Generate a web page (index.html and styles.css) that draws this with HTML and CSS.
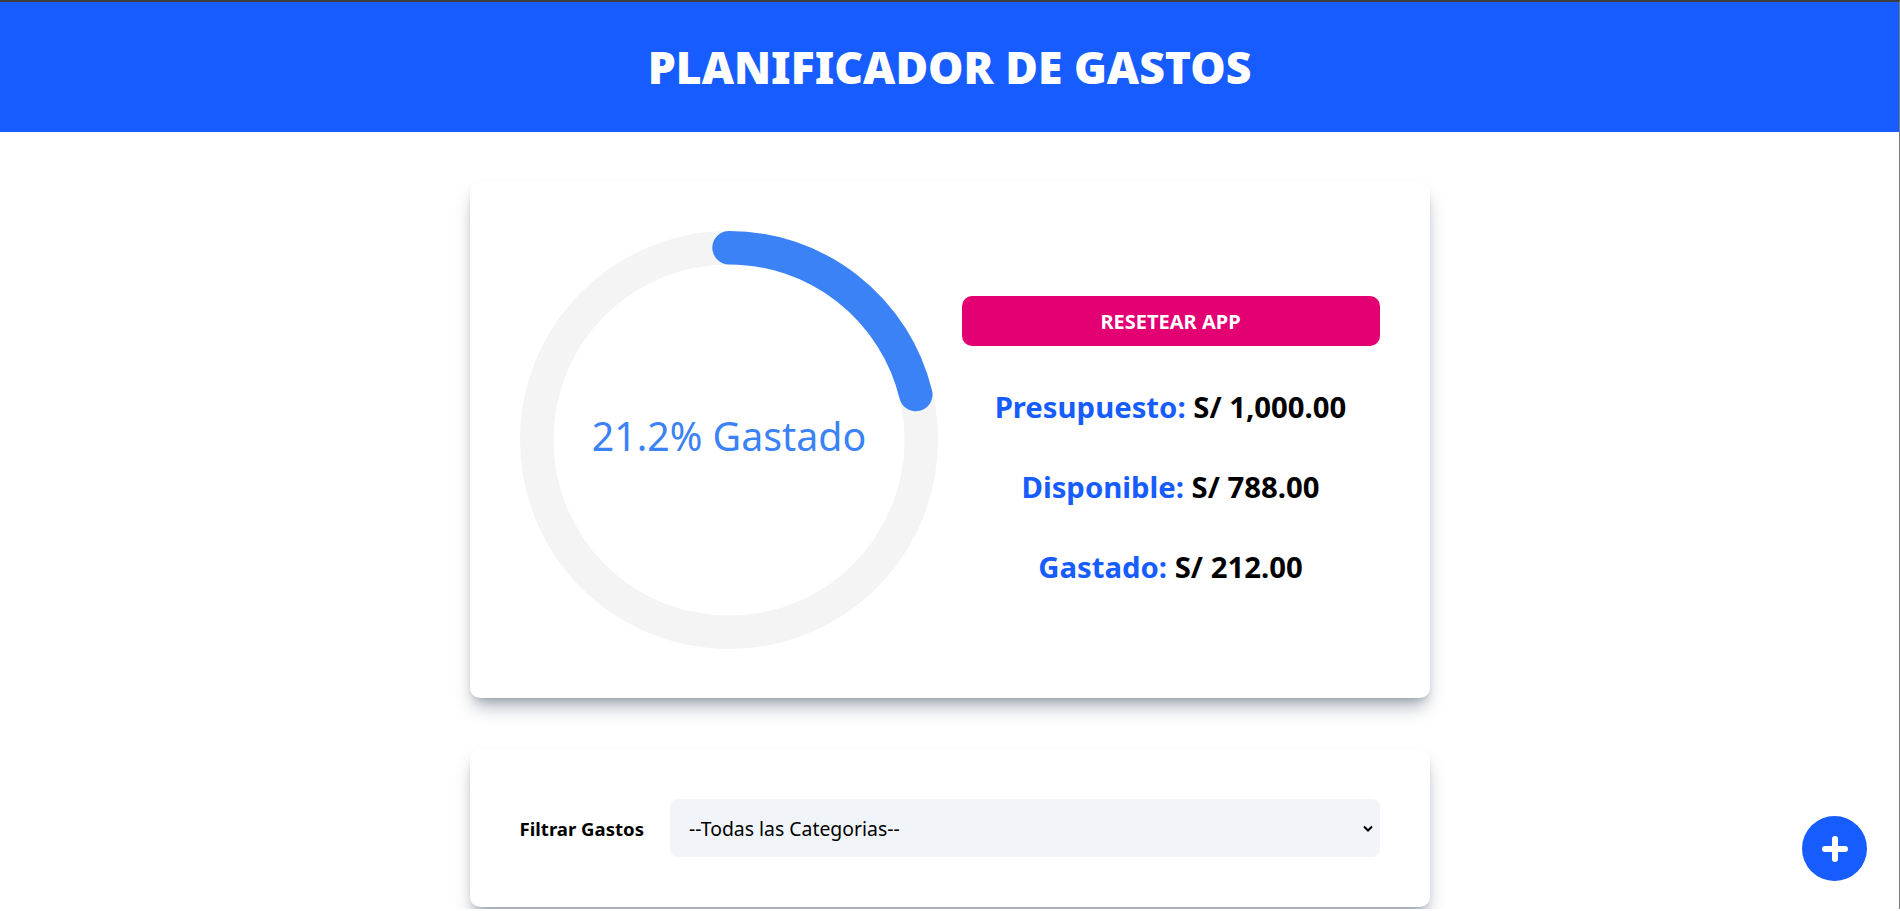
FILE: index.html
```html
<!DOCTYPE html>
<html lang="es">
<head>
<meta charset="utf-8">
<title>Planificador de Gastos</title>
<link rel="stylesheet" href="styles.css">
</head>
<body>
<header class="header">
  <h1 class="title">Planificador de Gastos</h1>
</header>
<main class="main">
  <section class="card budget">
    <div class="chart">
      <svg class="progress" viewBox="0 0 100 100">
        <circle class="trail" cx="50" cy="50" r="46"></circle>
        <path class="bar" d="M50,4 A46,46 0 0 1 94.69,39.12"></path>
        <text class="progress-text" x="50" y="50">21.2% Gastado</text>
      </svg>
    </div>
    <div class="summary">
      <button class="reset" type="button">Resetear App</button>
      <p class="stat"><span class="stat-label">Presupuesto:</span> S/ 1,000.00</p>
      <p class="stat"><span class="stat-label">Disponible:</span> S/ 788.00</p>
      <p class="stat"><span class="stat-label">Gastado:</span> S/ 212.00</p>
    </div>
  </section>
  <section class="card filter">
    <form class="filter-form">
      <label class="filter-label" for="category">Filtrar Gastos</label>
      <div class="select-wrap">
        <select id="category" class="select">
          <option>--Todas las Categorias--</option>
          <option>Ahorro</option>
          <option>Comida</option>
          <option>Casa</option>
        </select>
        <svg class="chevron" viewBox="0 0 10 6"><path d="M1 1 L5 5 L9 1"></path></svg>
      </div>
    </form>
  </section>
</main>
<button class="fab" type="button" aria-label="Nuevo gasto">
  <svg viewBox="0 0 26 26"><path d="M13 3 V23 M3 13 H23"></path></svg>
</button>
</body>
</html>
```

FILE: styles.css
```css
* { box-sizing: border-box; }
html, body { margin: 0; padding: 0; }
body {
  background: #ffffff;
  font-family: "Noto Sans", "Open Sans", "Liberation Sans", sans-serif;
  border-top: 2px solid #3c3c3c;
  border-right: 1px solid #7a7a7a;
  min-height: 909px;
}
.header {
  background: #175cff;
  padding: 40px 0;
}
.title {
  margin: 0;
  color: #ffffff;
  text-align: center;
  text-transform: uppercase;
  font-size: 44.5px;
  line-height: 50px;
  font-weight: 900;
}
.main {
  width: 960px;
  margin: 0 auto;
  padding-top: 50px;
  display: flex;
  flex-direction: column;
  gap: 51px;
}
.card {
  background: #ffffff;
  border-radius: 10px;
  box-shadow: 0 12px 18px -4px rgba(71, 85, 105, 0.45), 0 5px 8px -5px rgba(71, 85, 105, 0.4);
}
.budget {
  padding: 49px 50px;
  display: grid;
  grid-template-columns: 1fr 1fr;
  column-gap: 24px;
  align-items: center;
}
.chart { display: flex; }
.progress { width: 418px; height: 418px; display: block; }
.trail { fill: none; stroke: #f4f4f4; stroke-width: 8; }
.bar { fill: none; stroke: #3b82f6; stroke-width: 8; stroke-linecap: round; }
.progress-text {
  fill: #3b82f6;
  font-size: 9.4px;
  text-anchor: middle;
  dominant-baseline: middle;
  font-family: "Noto Sans", "Open Sans", sans-serif;
}
.summary {
  display: flex;
  flex-direction: column;
  gap: 40px;
  padding-top: 3px;
}
.reset {
  height: 50px;
  border: 0;
  border-radius: 10px;
  background: #e30072;
  color: #ffffff;
  font-family: inherit;
  font-size: 20px;
  font-weight: 700;
  text-transform: uppercase;
  cursor: pointer;
  margin-bottom: 1px;
}
.stat {
  margin: 0;
  text-align: center;
  font-size: 29.3px;
  line-height: 40px;
  font-weight: 700;
  color: #000000;
}
.stat-label { color: #175cff; }
.filter { padding: 50px; }
.filter-form {
  display: flex;
  align-items: center;
  gap: 26px;
}
.filter-label {
  font-size: 18.6px;
  font-weight: 700;
  color: #000;
  white-space: nowrap;
}
.select-wrap {
  flex: 1;
  position: relative;
}
.select {
  width: 100%;
  height: 58px;
  appearance: none;
  -webkit-appearance: none;
  border: 0;
  border-radius: 8px;
  background: #f1f5f9;
  padding: 0 16px 0 19px;
  font-family: inherit;
  font-size: 19.4px;
  color: #000;
}
.chevron {
  position: absolute;
  right: 7px;
  top: 26px;
  width: 10px;
  height: 7px;
  fill: none;
  stroke: #000;
  stroke-width: 2;
  pointer-events: none;
}
.fab {
  position: fixed;
  right: 33px;
  bottom: 30px;
  width: 65px;
  height: 65px;
  border-radius: 50%;
  border: 0;
  background: #175cff;
  display: flex;
  align-items: center;
  justify-content: center;
  padding: 0;
  cursor: pointer;
}
.fab svg {
  width: 26px;
  height: 26px;
  fill: none;
  stroke: #ffffff;
  stroke-width: 6;
  stroke-linecap: round;
}
```
